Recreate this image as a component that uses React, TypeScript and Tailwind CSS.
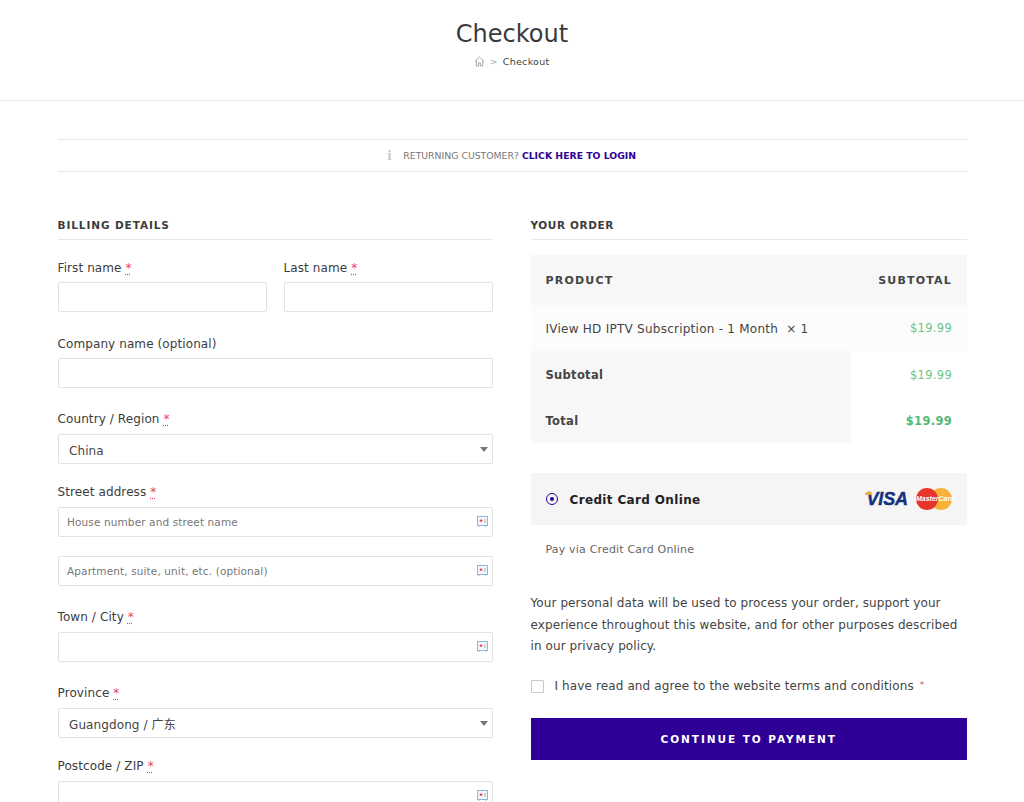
import React from "react";

const Req = () => (
  <span className="text-[#e8455a] underline decoration-dotted underline-offset-2 ml-1">*</span>
);

const FillIcon = () => (
  <svg width="11" height="11" viewBox="0 0 11 11" className="absolute right-[4px] top-[8px]" fill="none">
    <rect x="0.5" y="0.5" width="10" height="9" fill="#f3f7fc" stroke="#8fb4de" />
    <path d="M2 10v1M9 10v1" stroke="#8fb4de" />
    <path d="M4 2.6l.6 1.3 1.3.1-1 .9.3 1.3-1.2-.7-1.2.7.3-1.3-1-.9 1.3-.1z" fill="#e8455a" />
    <path d="M8 3v4" stroke="#8fb4de" />
  </svg>
);

const Label = ({ children, req, high }: { children: React.ReactNode; req?: boolean; high?: boolean }) => (
  <div className={"h-5 leading-5 text-[12px] tracking-[0.1px] text-[#3c3c3c] " + (high ? "mb-[5px]" : "mb-[4px]")}>
    {children}
    {req && <Req />}
  </div>
);

const Input = ({ placeholder, icon, className }: { placeholder?: string; icon?: boolean; className?: string }) => (
  <div className={"relative h-[30px] border border-[#e2e2e2] rounded-[2px] bg-white flex items-center px-[8.5px] pt-[1px] text-[10.5px] tracking-[0.12px] text-[#777] " + (className ?? "")}>
    {placeholder}
    {icon && <FillIcon />}
  </div>
);

const Select = ({ value }: { value: string }) => (
  <div className="relative h-[30px] border border-[#e2e2e2] rounded-[2px] bg-white flex items-center pl-[10.5px] pt-[3px] text-[12px] tracking-[0.1px] text-[#444] mb-[18px]">
    {value}
    <span className="absolute right-[4px] top-[12px] w-0 h-0 border-x-[4px] border-x-transparent border-t-[5px] border-t-[#777]" />
  </div>
);

const Heading = ({ children, className }: { children: React.ReactNode; className?: string }) => (
  <h3 className={"h-[30px] leading-[31px] border-b border-[#e8e8e8] text-[10.5px] font-bold text-[#3c3c3c] uppercase " + (className ?? "")}>
    {children}
  </h3>
);

export default function App() {
  return (
    <div
      className="h-[802px] overflow-hidden bg-white text-[#444]"
      style={{ fontFamily: '"DejaVu Sans", "Noto Sans CJK SC", sans-serif' }}
    >
      <header className="h-[101px] border-b border-[#eeeeee] flex flex-col items-center">
        <h1 className="mt-[17px] h-[34px] leading-[34px] text-[24px] text-[#3a3a3a]">Checkout</h1>
        <div className="mt-[1px] flex items-center text-[9.5px] tracking-[0.3px] text-[#444] h-5">
          <svg width="11" height="11" viewBox="0 0 24 24" fill="none" stroke="#8d8d8d" strokeWidth="1.6" className="mr-[4px] mb-[2px]">
            <path d="M2 12L12 2.5 22 12M5 9.5V22h5v-7h4v7h5V9.5" />
          </svg>
          <span className="text-[#aaa] mr-[5px]">&gt;</span>
          <span>Checkout</span>
        </div>
      </header>

      <main className="w-[909.5px] ml-[57.5px]">
        <div className="mt-[38px] h-[33px] pr-[1px] border-y border-[#e6e6e6] flex items-center justify-center text-[9.3px] text-[#777]">
          <span className="font-bold text-[#c8c8c8] text-[14px] mr-[12px] font-['Liberation_Serif']">i</span>
          <span>RETURNING CUSTOMER?</span>
          <span className="ml-[3px] font-bold text-[#2f0096]">CLICK HERE TO LOGIN</span>
        </div>

        <div className="mt-[38px] flex gap-[37.5px]">
          <section className="w-[435.5px]">
            <Heading className="tracking-[0.9px]">Billing details</Heading>
            <div className="mt-[18px] flex gap-[17px] mb-[22px]">
              <div className="w-[209px]">
                <Label req>First name</Label>
                <Input />
              </div>
              <div className="w-[209.5px]">
                <Label req>Last name</Label>
                <Input />
              </div>
            </div>
            <Label>Company name (optional)</Label>
            <Input className="mb-[21px]" />
            <Label req high>Country / Region</Label>
            <Select value="China" />
            <Label req high>Street address</Label>
            <Input placeholder="House number and street name" icon className="mb-[19px]" />
            <Input placeholder="Apartment, suite, unit, etc. (optional)" icon className="mb-[21px]" />
            <Label req high>Town / City</Label>
            <Input icon className="mb-[21px]" />
            <Label req high>Province</Label>
            <Select value="Guangdong / 广东" />
            <Label req high>Postcode / ZIP</Label>
            <Input icon />
          </section>

          <section className="w-[436.5px]">
            <Heading className="tracking-[0.6px]">Your order</Heading>
            <div className="mt-[15px]">
              <div className="h-[50px] pt-[2px] bg-[#f7f7f7] flex items-center justify-between px-[15px] text-[11px] font-bold tracking-[1.2px] text-[#444]">
                <span>PRODUCT</span>
                <span>SUBTOTAL</span>
              </div>
              <div className="h-[46px] pt-[2px] bg-[#fcfcfc] flex items-center justify-between px-[15px] text-[12px] tracking-[0.25px] text-[#444]">
                <span>IView HD IPTV Subscription - 1 Month &nbsp;× 1</span>
                <span className="text-[11.5px] tracking-[0.3px] text-[#6cc487]">$19.99</span>
              </div>
              <div className="flex h-[46px] items-stretch text-[11.5px]">
                <div className="w-[320px] bg-[#f7f7f7] flex items-center pl-[15px] pt-[3px] font-bold tracking-[0.3px]">Subtotal</div>
                <div className="flex-1 flex items-center justify-end pt-[3px] pr-[15px] text-[#6cc487] tracking-[0.3px]">$19.99</div>
              </div>
              <div className="flex h-[46px] items-stretch text-[11.5px]">
                <div className="w-[320px] bg-[#f7f7f7] flex items-center pl-[15px] pt-[3px] font-bold tracking-[0.3px]">Total</div>
                <div className="flex-1 flex items-center justify-end pt-[3px] pr-[15px] text-[#55b875] font-bold tracking-[0.3px]">$19.99</div>
              </div>
            </div>

            <div className="mt-[30px] h-[52px] bg-[#f5f5f5] flex items-center pl-[15px] pr-[15px]">
              <span className="w-3 h-3 rounded-full border border-[#2f0096] flex items-center justify-center mr-[12px]">
                <span className="w-1 h-1 rounded-full bg-[#2f0096]" />
              </span>
              <span className="text-[12px] pt-[2px] font-bold tracking-[0.35px] text-[#222] flex-1">Credit Card Online</span>
              <span className="relative text-[18px] leading-none font-bold italic text-[#15317f] mr-[8px] font-['Liberation_Sans'] tracking-[-0.1px] [-webkit-text-stroke:0.4px_#15317f]">
                <span className="absolute -left-[1px] top-[2px] w-[6px] h-[3px] bg-[#f0a92e] rounded-tl-[3px]" />
                VISA
              </span>
              <span className="relative w-[36px] h-[22px] block">
                <span className="absolute right-0 top-0 w-[22px] h-[22px] rounded-full bg-[#f7b23c]" />
                <span className="absolute left-0 top-0 w-[22px] h-[22px] rounded-full bg-[#e8352c]" />
                <span className="absolute left-0 right-0 top-[7px] text-center text-[7px] leading-[8px] italic font-bold text-white font-['Liberation_Sans']">MasterCard</span>
              </span>
            </div>

            <p className="mt-[15px] h-[20px] leading-[20px] pl-[15px] text-[11px] tracking-[0.18px] text-[#666]">Pay via Credit Card Online</p>

            <p className="mt-[33px] text-[12px] leading-[21.7px] tracking-[0.09px] text-[#444]">
              Your personal data will be used to process your order, support your experience throughout this website, and for other purposes described in our privacy policy.
            </p>

            <div className="mt-[18px] h-5 flex items-center text-[12px] tracking-[0.12px] text-[#444]">
              <span className="w-[13px] h-[13px] border border-[#c9c9c9] rounded-[1px] mr-[11px]" />
              I have read and agree to the website terms and conditions
              <span className="text-[#e8455a] text-[9px] ml-[6px]">*</span>
            </div>

            <div className="mt-[22px] h-[42px] pt-[2px] bg-[#2f0096] flex items-center justify-center text-[10.5px] font-bold tracking-[1.95px] text-white">
              CONTINUE TO PAYMENT
            </div>
          </section>
        </div>
      </main>
    </div>
  );
}
